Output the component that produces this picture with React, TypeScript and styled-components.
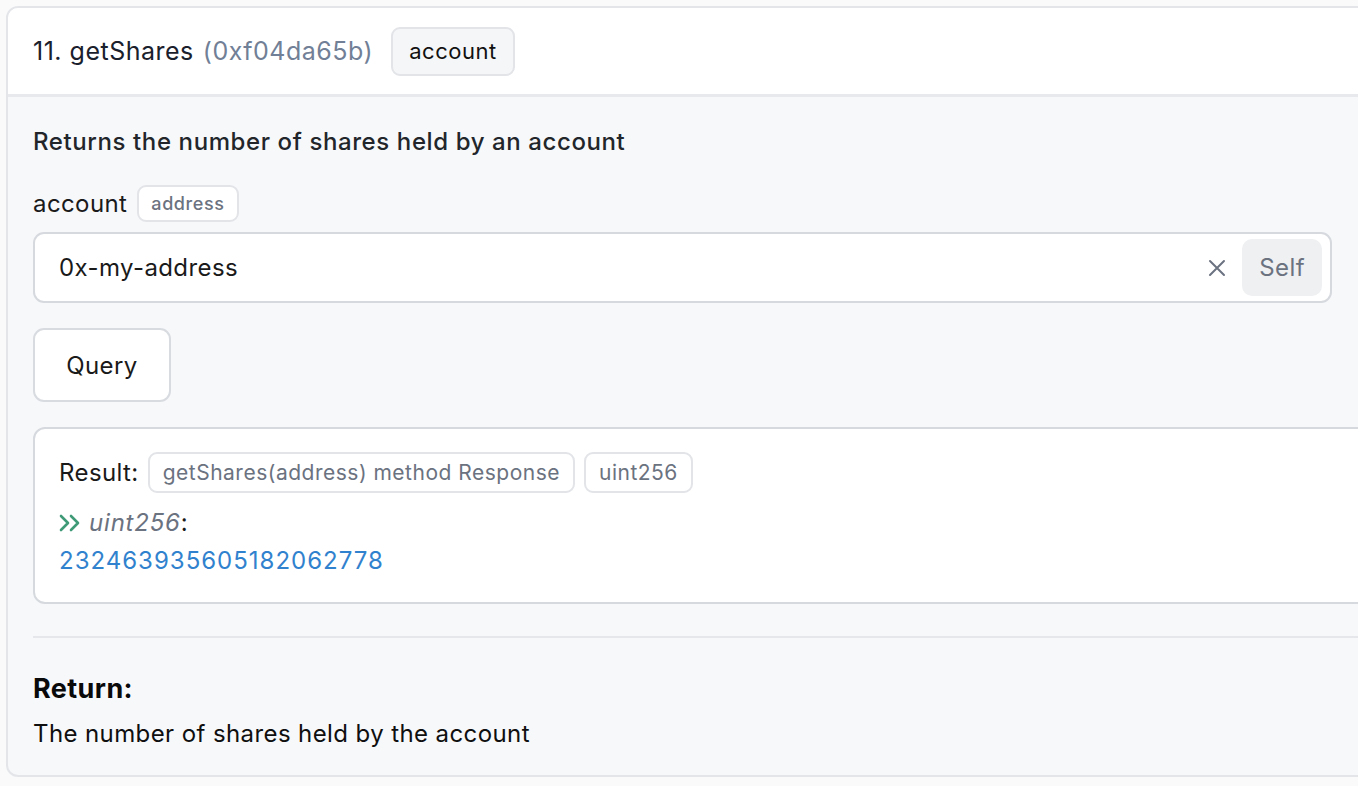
import styled, { createGlobalStyle } from 'styled-components';

const GlobalStyle = createGlobalStyle`
  html, body {
    margin: 0;
    padding: 0;
    background: #fafafa;
    overflow: hidden;
    font-family: Inter, "Noto Sans", "Liberation Sans", sans-serif;
  }
`;

const Page = styled.div`
  padding: 6px 0 0 6px;
  width: 1400px;
`;

const Card = styled.section`
  border: 2px solid #e3e5e9;
  border-radius: 12px;
  background: #f7f8fa;
  overflow: hidden;
`;

const Header = styled.header`
  display: flex;
  align-items: center;
  gap: 18px;
  height: 86px;
  padding: 0 25px;
  background: #ffffff;
  border-bottom: 3px solid #e8e9ed;
`;

const Title = styled.h2`
  margin: 0;
  font-size: 25px;
  letter-spacing: 0.5px;
  font-weight: 400;
  color: #1a202c;
`;

const Selector = styled.span`
  color: #718096;
  margin-left: 9px;
`;

const Chip = styled.span<{ $size?: 'sm' | 'md' | 'lg'; $white?: boolean }>`
  display: inline-flex;
  align-items: center;
  box-sizing: border-box;
  border: 2px solid #e2e4e8;
  border-radius: 9px;
  background: ${p => (p.$white ? '#ffffff' : '#f5f6f8')};
  color: ${p => (p.$size === 'lg' ? '#111111' : '#6b7280')};
  font-size: ${p => (p.$size === 'lg' ? '22px' : p.$size === 'sm' ? '18px' : '21px')};
  letter-spacing: ${p => (p.$size === 'sm' ? '0.6px' : '0.5px')};
  font-weight: ${p => (p.$size === 'sm' ? 500 : 400)};
  height: ${p => (p.$size === 'lg' ? '49px' : p.$size === 'sm' ? '37px' : '41px')};
  padding: 0 ${p => (p.$size === 'lg' ? '16px' : p.$size === 'sm' ? '12px' : '13px')};
  white-space: nowrap;
`;

const Body = styled.div`
  padding: 30px 25px 27px;
  display: flex;
  flex-direction: column;
  color: #1f2328;
`;

const Description = styled.p`
  margin: 0 0 28px;
  font-size: 24px;
  letter-spacing: 0.6px;
  font-weight: 500;
  line-height: 30px;
  color: #22262b;
`;

const FieldLabel = styled.div`
  display: flex;
  align-items: center;
  gap: 10px;
  font-size: 24px;
  letter-spacing: 0.4px;
  color: #1a1a1a;
  margin-bottom: 10px;
`;

const InputBox = styled.div`
  box-sizing: border-box;
  width: 1299px;
  height: 71px;
  display: flex;
  align-items: center;
  background: #ffffff;
  border: 2px solid #d6d9de;
  border-radius: 11px;
  padding: 0 8px 0 24px;
`;

const InputText = styled.span`
  flex: 1;
  font-size: 24px;
  letter-spacing: 0.4px;
  color: #1a1a1a;
`;

const ClearIcon = styled.svg`
  width: 18px;
  height: 18px;
  margin-right: 16px;
  color: #6b7280;
`;

const SelfButton = styled.button`
  height: 57px;
  padding: 0 17px;
  border: none;
  border-radius: 10px;
  background: #eff0f2;
  color: #6b7280;
  font-family: inherit;
  font-size: 24px;
  letter-spacing: 0.4px;
`;

const QueryButton = styled.button`
  align-self: flex-start;
  box-sizing: border-box;
  height: 74px;
  width: 138px;
  margin-top: 25px;
  background: #ffffff;
  border: 2px solid #d8dbe0;
  border-radius: 11px;
  font-family: inherit;
  font-size: 24px;
  letter-spacing: 0.4px;
  color: #1a1a1a;
`;

const ResultBox = styled.div`
  margin-top: 25px;
  margin-right: -60px;
  box-sizing: border-box;
  height: 177px;
  background: #ffffff;
  border: 2px solid #d6d9de;
  border-radius: 12px;
  padding: 23px 24px;
  display: flex;
  flex-direction: column;
`;

const ResultRow = styled.div`
  display: flex;
  align-items: center;
  gap: 9px;
  font-size: 24px;
  letter-spacing: 0.4px;
  color: #1a1a1a;
`;

const TypeLine = styled.div`
  display: flex;
  align-items: center;
  margin-top: 15px;
  font-size: 24px;
  letter-spacing: 0.8px;
  line-height: 30px;
  color: #1a1a1a;
`;

const TypeName = styled.em`
  color: #6b7280;
  margin-left: 8px;
`;

const Value = styled.div`
  margin-top: 5px;
  font-size: 24px;
  letter-spacing: 1px;
  line-height: 36px;
  color: #3182ce;
`;

const Divider = styled.hr`
  margin: 32px -60px 0 0;
  border: none;
  border-top: 2px solid #e5e7eb;
`;

const ReturnTitle = styled.h3`
  margin: 34px 0 0;
  font-size: 27px;
  letter-spacing: 0.4px;
  font-weight: 700;
  color: #0a0a0a;
`;

const ReturnText = styled.p`
  margin: 14px 0 0;
  font-size: 24px;
  letter-spacing: 0.4px;
  color: #0f0f0f;
`;

export default function App() {
  return (
    <Page>
      <GlobalStyle />
      <Card>
        <Header>
          <Title>
            11. getShares<Selector>(0xf04da65b)</Selector>
          </Title>
          <Chip $size="lg">account</Chip>
        </Header>
        <Body>
          <Description>Returns the number of shares held by an account</Description>
          <FieldLabel>
            account <Chip $size="sm" $white>address</Chip>
          </FieldLabel>
          <InputBox>
            <InputText>0x-my-address</InputText>
            <ClearIcon viewBox="0 0 18 18" fill="none" stroke="currentColor" strokeWidth="2" strokeLinecap="round">
              <path d="M2 2l14 14M16 2L2 16" />
            </ClearIcon>
            <SelfButton>Self</SelfButton>
          </InputBox>
          <QueryButton>Query</QueryButton>
          <ResultBox>
            <ResultRow>
              Result:
              <Chip $white>getShares(address) method Response</Chip>
              <Chip $white>uint256</Chip>
            </ResultRow>
            <TypeLine>
              <svg width="22" height="18" viewBox="0 0 22 18" fill="none" stroke="#3f9a78" strokeWidth="2.6" strokeLinecap="round" strokeLinejoin="round">
                <path d="M2 2l7 7-7 7M12 2l7 7-7 7" />
              </svg>
              <TypeName>uint256</TypeName>:
            </TypeLine>
            <Value>232463935605182062778</Value>
          </ResultBox>
          <Divider />
          <ReturnTitle>Return:</ReturnTitle>
          <ReturnText>The number of shares held by the account</ReturnText>
        </Body>
      </Card>
    </Page>
  );
}
